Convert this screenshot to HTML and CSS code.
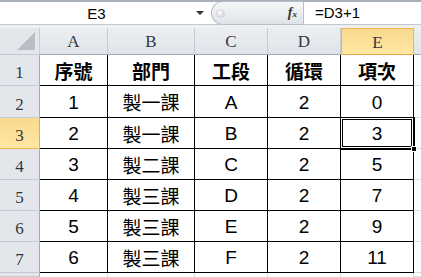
FILE: index.html
```html
<!DOCTYPE html>
<html>
<head>
    <title>Sheet1</title>
    <link rel="stylesheet" href="styles.css">
</head>
<body>
    <!-- Formula bar -->
    <div class="formula-bar">
        <div class="name-box">
            <span class="name-text">E3</span>
            <span class="drop-arrow"></span>
        </div>
        <div class="fx-box">
            <span class="knob"></span>
            <span class="fx">f<sub>x</sub></span>
        </div>
        <div class="formula-text">=D3+1</div>
    </div>
    <div class="gap-strip"></div>

    <!-- Sheet grid -->
    <div class="sheet">
        <div class="corner"><span class="corner-tri"></span></div>
        <div class="col-head">A</div>
        <div class="col-head">B</div>
        <div class="col-head">C</div>
        <div class="col-head">D</div>
        <div class="col-head active">E</div>
        <div class="col-head last"></div>

        <div class="row-head">1</div>
        <div class="cell title first-col first-row">序號</div>
        <div class="cell title first-row">部門</div>
        <div class="cell title first-row">工段</div>
        <div class="cell title first-row">循環</div>
        <div class="cell title first-row">項次</div>
        <div class="cell empty"></div>

        <div class="row-head">2</div>
        <div class="cell first-col">1</div>
        <div class="cell cjk">製一課</div>
        <div class="cell">A</div>
        <div class="cell">2</div>
        <div class="cell">0</div>
        <div class="cell empty"></div>

        <div class="row-head active">3</div>
        <div class="cell first-col">2</div>
        <div class="cell cjk">製一課</div>
        <div class="cell">B</div>
        <div class="cell">2</div>
        <div class="cell selected">3<span class="handle"></span></div>
        <div class="cell empty"></div>

        <div class="row-head">4</div>
        <div class="cell first-col">3</div>
        <div class="cell cjk">製二課</div>
        <div class="cell">C</div>
        <div class="cell">2</div>
        <div class="cell">5</div>
        <div class="cell empty"></div>

        <div class="row-head">5</div>
        <div class="cell first-col">4</div>
        <div class="cell cjk">製三課</div>
        <div class="cell">D</div>
        <div class="cell">2</div>
        <div class="cell">7</div>
        <div class="cell empty"></div>

        <div class="row-head">6</div>
        <div class="cell first-col">5</div>
        <div class="cell cjk">製三課</div>
        <div class="cell">E</div>
        <div class="cell">2</div>
        <div class="cell">9</div>
        <div class="cell empty"></div>

        <div class="row-head">7</div>
        <div class="cell first-col">6</div>
        <div class="cell cjk">製三課</div>
        <div class="cell">F</div>
        <div class="cell">2</div>
        <div class="cell">11</div>
        <div class="cell empty"></div>

        <div class="row-head"></div>
        <div class="cell blank"></div>
        <div class="cell blank"></div>
        <div class="cell blank"></div>
        <div class="cell blank"></div>
        <div class="cell blank"></div>
        <div class="cell empty"></div>
    </div>
</body>
</html>
```

FILE: styles.css
```css
* {
    margin: 0;
    padding: 0;
    box-sizing: border-box;
}
body {
    width: 421px;
    height: 277px;
    overflow: hidden;
    background: #fff;
    font-family: "Liberation Sans", Arial, sans-serif;
    color: #000;
}
/* Formula bar at the top */
.formula-bar {
    display: flex;
    height: 25px;
    border-top: 2px solid #a9b0b9;
    border-bottom: 1px solid #c3c8cf;
    background: #fff;
}
.name-box {
    width: 211px;
    display: flex;
    align-items: center;
    position: relative;
}
.name-text {
    width: 193px;
    text-align: center;
    font-size: 15px;
    padding-top: 1px;
}
.drop-arrow {
    width: 0;
    height: 0;
    border-left: 4px solid transparent;
    border-right: 4px solid transparent;
    border-top: 4px solid #333;
    margin-left: 3px;
}
.fx-box {
    width: 92px;
    display: flex;
    align-items: center;
    justify-content: space-between;
    padding: 0 6px 0 4px;
    background: linear-gradient(#f6f7f9, #dfe3e8);
    border: 1px solid #b9bfc7;
    border-right: none;
    border-radius: 12px 0 0 12px;
    margin: -1px 0;
}
.knob {
    width: 9px;
    height: 9px;
    border-radius: 50%;
    background: radial-gradient(circle at 40% 35%, #ffffff, #c4c8cd);
    border: 1px solid #d3d6da;
}
.fx {
    font-family: "Liberation Serif", serif;
    font-style: italic;
    font-weight: bold;
    font-size: 14px;
    color: #333;
}
.fx sub {
    font-size: 9px;
    vertical-align: 0;
}
.formula-text {
    flex: 1;
    border-left: 1px solid #b9bfc7;
    padding-left: 11px;
    font-size: 15px;
    line-height: 22px;
}
.gap-strip {
    height: 3px;
    background: #eef0f3;
}
/* Sheet grid */
.sheet {
    display: grid;
    grid-template-columns: 40px 68px 87px 73px 73px 73px 1fr;
    grid-template-rows: 27px 31px 32px 31px 31px 31px 31px 31px 4px;
}
.corner {
    background: #e3e7ec;
    border-right: 1px solid #c5cbd2;
    border-bottom: 1px solid #c5cbd2;
    position: relative;
}
.corner-tri {
    position: absolute;
    right: 4px;
    bottom: 4px;
    width: 0;
    height: 0;
    border-left: 18px solid transparent;
    border-bottom: 18px solid #b9bec5;
}
.col-head {
    background: linear-gradient(#eceef1, #e0e4e9);
    border-right: 1px solid #c5cbd2;
    border-bottom: 1px solid #9eabb9;
    font-family: "Liberation Serif", serif;
    font-size: 17px;
    color: #30383f;
    display: flex;
    align-items: center;
    justify-content: center;
    padding-top: 2px;
}
.col-head.active {
    background: linear-gradient(#f9d98e, #ffe7a2);
    border: 1px solid #f0b44c;
    border-bottom-color: #e9a84a;
}
.col-head.last {
    border-right: none;
}
.row-head {
    background: #e3e7ec;
    border-right: 1px solid #9eabb9;
    border-bottom: 1px solid #c5cbd2;
    font-family: "Liberation Serif", serif;
    font-size: 17px;
    color: #30383f;
    display: flex;
    align-items: flex-end;
    justify-content: center;
    padding-bottom: 2px;
}
.row-head.active {
    background: linear-gradient(#f9d98e, #ffe7a2);
    border-right-color: #e9a84a;
    border-bottom-color: #f0b44c;
}
.cell {
    border-right: 1px solid #000;
    border-bottom: 1px solid #000;
    display: flex;
    align-items: center;
    justify-content: center;
    font-size: 19px;
    padding-top: 2px;
    position: relative;
}
.cell.title {
    font-family: "Noto Sans CJK TC", sans-serif;
    font-weight: bold;
    font-size: 19px;
    padding-top: 0;
}
.cell.cjk {
    font-family: "Noto Sans CJK TC", sans-serif;
    font-size: 19px;
    padding-top: 0;
}
.cell.empty {
    border-right: none;
    border-bottom: 1px solid #dadcdd;
}
.cell.blank {
    border-right: 1px solid #dadcdd;
    border-bottom: none;
}
.cell.selected {
    outline: 1px solid #000;
    box-shadow: inset 0 0 0 1px #fff, inset 0 0 0 2px #000;
}
.handle {
    position: absolute;
    right: -4px;
    bottom: -4px;
    width: 6px;
    height: 6px;
    background: #000;
    border: 1px solid #fff;
    z-index: 2;
}
```
